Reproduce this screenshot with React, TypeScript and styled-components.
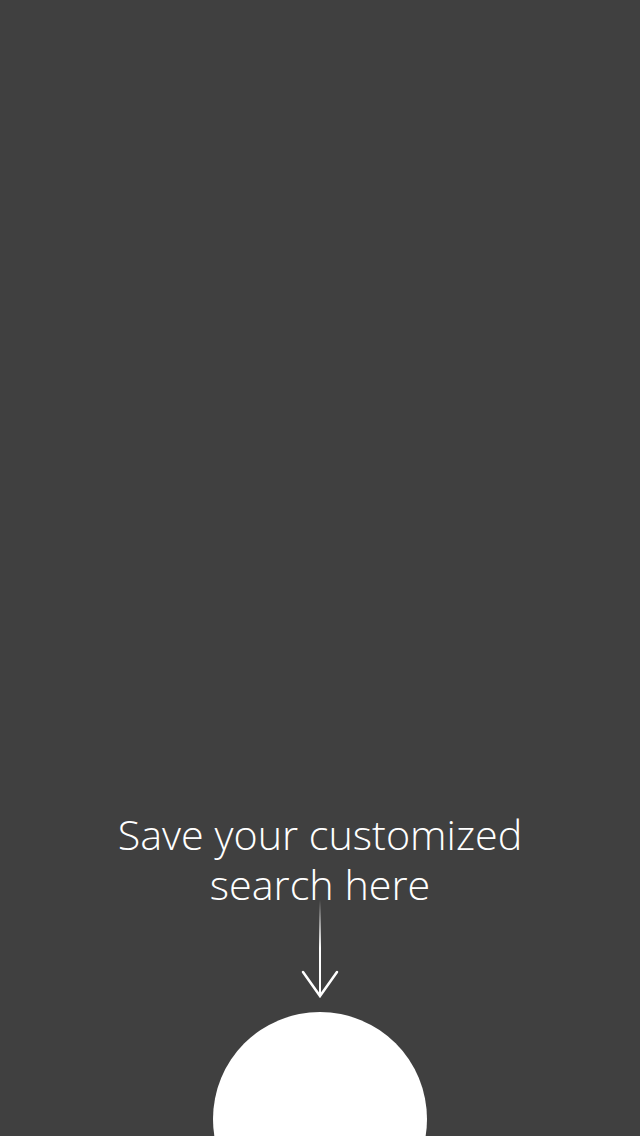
import React from "react";
import styled, { createGlobalStyle } from "styled-components";

const Global = createGlobalStyle`
  html, body {
    margin: 0;
    padding: 0;
    background: #404040;
  }
  #root {
    height: 100vh;
  }
`;

const Screen = styled.main`
  height: 100vh;
  overflow: hidden;
  display: flex;
  flex-direction: column;
  align-items: center;
  justify-content: flex-end;
  background: #404040;
  font-family: "Open Sans", "Noto Sans", sans-serif;
`;

const Hint = styled.p`
  margin: 0;
  color: #ffffff;
  font-size: 41.3px;
  font-weight: 300;
  line-height: 50px;
  text-align: center;
  width: 100%;
`;

const ArrowIcon = styled.svg`
  display: block;
  margin-top: -9px;
`;

const CircleSlot = styled.div`
  margin-top: 12px;
  height: 124px;
  width: 214px;
  overflow: hidden;
  display: flex;
  justify-content: center;
`;

const SaveButton = styled.button`
  flex: none;
  width: 214px;
  height: 214px;
  border-radius: 50%;
  border: none;
  padding: 0;
  background: #ffffff;
  cursor: pointer;
`;

export default function App() {
  return (
    <>
      <Global />
      <Screen>
        <Hint>
          Save your customized
          <br />
          search here
        </Hint>
        <ArrowIcon width="40" height="100" viewBox="0 0 40 100">
          <defs>
            <linearGradient id="stem" x1="0" y1="0" x2="0" y2="1">
              <stop offset="0" stopColor="#ffffff" stopOpacity="0" />
              <stop offset="0.5" stopColor="#ffffff" stopOpacity="1" />
              <stop offset="1" stopColor="#ffffff" stopOpacity="1" />
            </linearGradient>
          </defs>
          <rect x="19" y="0" width="2" height="96" fill="url(#stem)" />
          <polyline
            points="3,72 20,96 37,72"
            fill="none"
            stroke="#ffffff"
            strokeWidth="2.5"
            strokeLinecap="round"
            strokeLinejoin="miter"
          />
        </ArrowIcon>
        <CircleSlot>
          <SaveButton aria-label="Save search" />
        </CircleSlot>
      </Screen>
    </>
  );
}
